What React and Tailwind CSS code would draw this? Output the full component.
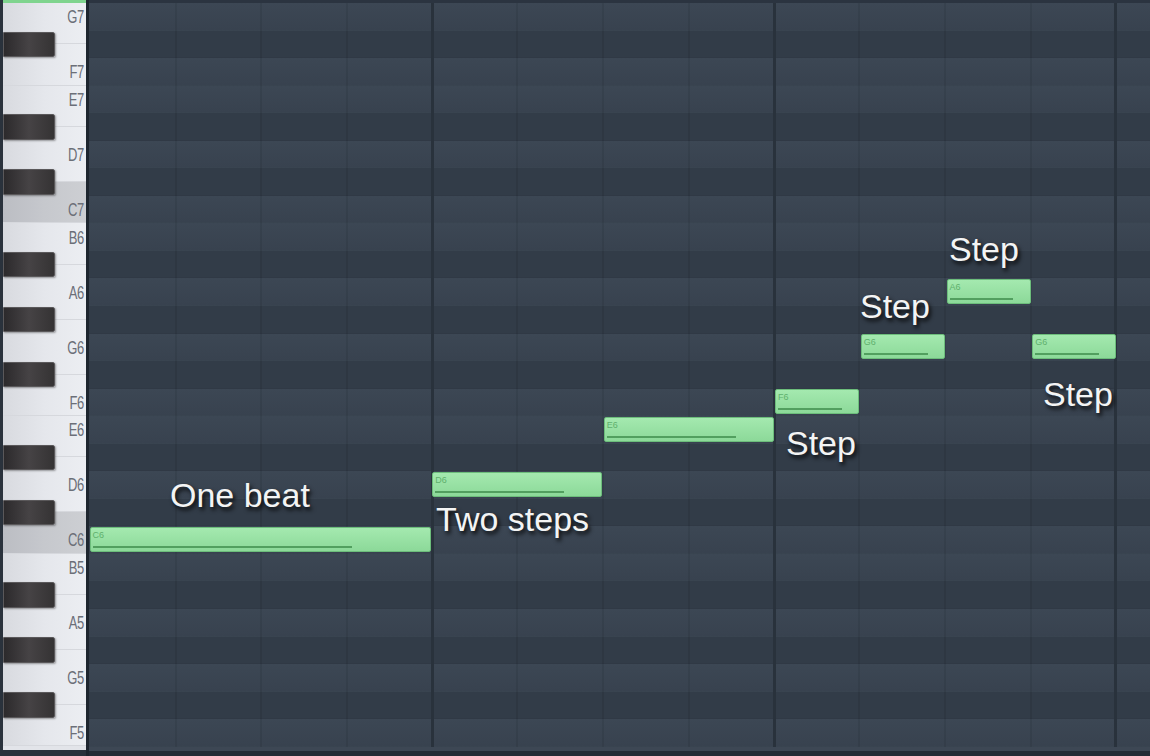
import React from "react";

const ROW = 27.56;
const STEP = 85.7;
const NAMES = ["C", "C#", "D", "D#", "E", "F", "F#", "G", "G#", "A", "A#", "B"];

// piano rows, top (G7) to bottom (F5)
const rows = [];
for (let m = 7 * 12 + 7; m >= 5 * 12 + 5; m--) {
  const n = NAMES[m % 12];
  rows.push({ name: n + Math.floor(m / 12), black: n.includes("#"), isC: n === "C" });
}
const rowOf = (name) => rows.findIndex((r) => r.name === name);

const notes = [
  { key: "C6", step: 0, len: 4 },
  { key: "D6", step: 4, len: 2 },
  { key: "E6", step: 6, len: 2 },
  { key: "F6", step: 8, len: 1 },
  { key: "G6", step: 9, len: 1 },
  { key: "A6", step: 10, len: 1 },
  { key: "G6", step: 11, len: 1 },
];

const labels = [
  { text: "One beat", left: 170, top: 478 },
  { text: "Two steps", left: 436, top: 502 },
  { text: "Step", left: 786, top: 426 },
  { text: "Step", left: 860, top: 289 },
  { text: "Step", left: 949, top: 232 },
  { text: "Step", left: 1043, top: 377 },
];

function Piano() {
  return (
    <div className="grid grid-cols-1 grid-rows-[repeat(54,13.78px)]">
      {rows.map((r, i) => {
        if (r.black) return null;
        const start = i > 0 && rows[i - 1].black ? 2 * i : 2 * i + 1;
        const end = i < rows.length - 1 && rows[i + 1].black ? 2 * i + 3 : 2 * i + 2;
        return (
          <div
            key={"w" + r.name}
            style={{ gridRow: `${start} / ${end + 1}` }}
            className={`col-start-1 border-b border-[#d6d8dd] ${
              r.isC
                ? "bg-gradient-to-r from-[#bbbdc3] via-[#c6c8cd] to-[#cdcfd3]"
                : "bg-gradient-to-r from-[#d8dadf] via-[#e5e7ec] to-[#eceef2]"
            }`}
          />
        );
      })}
      {rows.map((r, i) =>
        r.black ? (
          <div
            key={"b" + r.name}
            style={{ gridRow: `${2 * i + 1} / ${2 * i + 3}` }}
            className="col-start-1 w-[52px] my-[1px] rounded-r-[2px] border border-[#5a585a] bg-gradient-to-r from-[#2c2a2c] via-[#464345] to-[#353334] shadow-[1px_1px_2px_rgba(0,0,0,0.35)]"
          />
        ) : null
      )}
      {rows.map((r, i) =>
        r.black ? null : (
          <div
            key={"l" + r.name}
            style={{ gridRow: `${2 * i + 1} / ${2 * i + 3}` }}
            className="col-start-1 flex items-center justify-end pr-[2px]"
          >
            <span className="text-[13px] leading-none text-[#6b6f78] scale-y-[1.35] tracking-[-0.3px]">
              {r.name}
            </span>
          </div>
        )
      )}
    </div>
  );
}

function Note({ k, step, len }) {
  const i = rowOf(k);
  const w = len * STEP - 1.5;
  return (
    <div
      className="absolute rounded-[2px] border border-[#6cbd7b] bg-gradient-to-b from-[#a4e9af] to-[#8cd999]"
      style={{ left: step * STEP + 0.5, top: i * ROW + 0.5, width: w, height: 25 }}
    >
      <div className="pl-[2px] pt-[3px] text-[9px] leading-none text-[#5fb06d]">{k}</div>
      <div
        className="absolute bottom-[3px] left-[2px] h-[2px] bg-[#529f5f]"
        style={{ width: w * 0.76 }}
      />
    </div>
  );
}

export default function App() {
  return (
    <div className="relative flex w-[1150px] h-[756px] overflow-hidden bg-[#242c36] font-['Liberation_Sans',Arial,sans-serif]">
      {/* keyboard */}
      <div className="w-[89px] shrink-0 flex flex-col pl-[3px] border-r-[3px] border-[#1e262f] bg-[#2a323c]">
        <div className="h-[3px] bg-[#7fd48e]" />
        <Piano />
        <div className="h-[4px] bg-[#e2e4e9]" />
      </div>

      {/* note grid */}
      <div className="flex-1 flex flex-col min-w-0">
        <div className="h-[3px] bg-[#2b3440]" />
        <div className="relative">
          {rows.map((r) => (
            <div
              key={r.name}
              className={`h-[27.56px] border-b border-black/[0.04] ${
                r.black ? "bg-[#323c48]" : "bg-gradient-to-b from-[#3c4754] to-[#38424f]"
              }`}
            />
          ))}

          {/* step / beat lines */}
          <div className="absolute inset-0 flex pointer-events-none">
            {Array.from({ length: 13 }).map((_, s) => (
              <div
                key={s}
                className={`w-[85.7px] shrink-0 ${
                  s === 0
                    ? ""
                    : s % 4 === 0
                    ? "border-l-[3px] border-[#29323c] -ml-[1px]"
                    : "border-l-2 border-black/[0.07]"
                }`}
              />
            ))}
          </div>

          {notes.map((n, idx) => (
            <Note key={idx} k={n.key} step={n.step} len={n.len} />
          ))}
        </div>
        <div className="h-[4px] bg-[#3d4754]" />
      </div>

      {/* annotations */}
      {labels.map((l, idx) => (
        <div
          key={idx}
          className="absolute text-[34px] leading-none text-[#f3f4f4] whitespace-nowrap [text-shadow:2px_3px_4px_rgba(0,0,0,0.9)]"
          style={{ left: l.left, top: l.top }}
        >
          {l.text}
        </div>
      ))}
    </div>
  );
}
